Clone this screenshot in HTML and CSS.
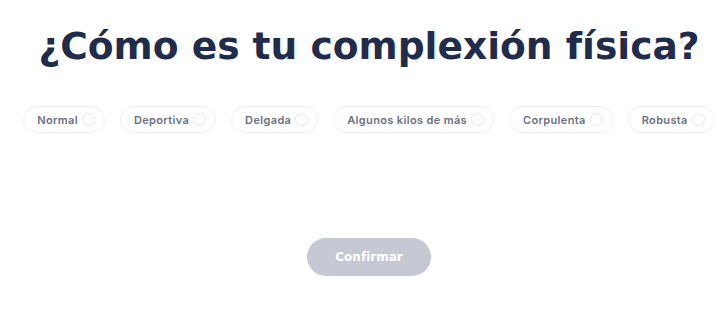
FILE: index.html
```html
<!DOCTYPE html>
<html lang="es">
<head>
<meta charset="utf-8">
<title>Complexión física</title>
<link rel="stylesheet" href="styles.css">
</head>
<body>
<main class="page">
  <h1 class="title">¿Cómo es tu complexión física?</h1>
  <div class="options">
    <label class="pill"><span class="pill-text">Normal</span><span class="radio"></span></label>
    <label class="pill"><span class="pill-text">Deportiva</span><span class="radio"></span></label>
    <label class="pill"><span class="pill-text">Delgada</span><span class="radio"></span></label>
    <label class="pill"><span class="pill-text">Algunos kilos de más</span><span class="radio"></span></label>
    <label class="pill"><span class="pill-text">Corpulenta</span><span class="radio"></span></label>
    <label class="pill"><span class="pill-text">Robusta</span><span class="radio"></span></label>
  </div>
  <div class="actions">
    <button class="confirm" type="button">Confirmar</button>
  </div>
</main>
</body>
</html>
```

FILE: styles.css
```css
* { box-sizing: border-box; }
html, body { margin: 0; padding: 0; background: #ffffff; }
body { font-family: "DejaVu Sans", "Noto Sans", sans-serif; }
.page {
  width: 720px;
  height: 325px;
  padding: 0 0 0 18px;
  display: flex;
  flex-direction: column;
  align-items: center;
}
.title {
  margin: 24px 0 0 0;
  font-size: 37.6px;
  line-height: 44px;
  font-weight: 700;
  color: #1f2c4c;
  letter-spacing: 0;
  white-space: nowrap;
}
.options {
  margin-top: 38px;
  display: flex;
  gap: 15px;
}
.pill {
  height: 27px;
  display: flex;
  align-items: center;
  gap: 4px;
  padding: 0 9px 0 13px;
  border: 1px solid #eceef2;
  border-radius: 14px;
  font-family: "Inter", "DejaVu Sans", sans-serif;
  font-size: 11px;
  letter-spacing: 0.35px;
  font-weight: 600;
  color: #6c7182;
  white-space: nowrap;
}
.radio {
  width: 13px;
  height: 13px;
  border: 1px solid #e3e5ea;
  border-radius: 50%;
}
.actions {
  margin-top: 105px;
}
.confirm {
  width: 124px;
  height: 38px;
  border: none;
  border-radius: 19px;
  background: #c6c9d4;
  color: #ffffff;
  font-family: inherit;
  font-size: 12px;
  font-weight: 700;
}
```
